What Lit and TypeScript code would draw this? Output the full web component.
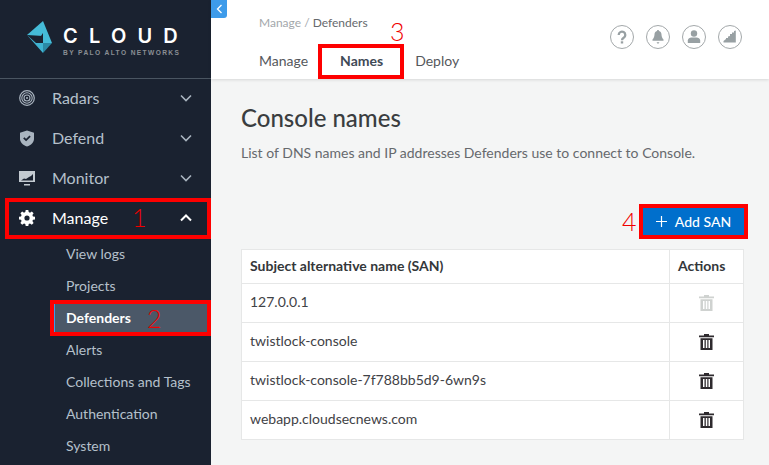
import { LitElement, html, css, svg } from "lit";
import { customElement } from "lit/decorators.js";

const chevDown = html`<svg class="chev" width="12" height="8" viewBox="0 0 12 8"><path d="M1 1.500l5 5 5-5" fill="none" stroke="currentColor" stroke-width="1.600"/></svg>`;
const chevUp = html`<svg class="chev" width="12" height="8" viewBox="0 0 12 8"><path d="M1 6.500l5-5 5 5" fill="none" stroke="currentColor" stroke-width="2"/></svg>`;

const radar = html`<svg width="16" height="16" viewBox="0 0 16 16" fill="none" stroke="#a9b4bf"><circle cx="8" cy="8" r="7.300" stroke-width="1.200"/><circle cx="8" cy="8" r="5.200" stroke-width="1.100"/><circle cx="8" cy="8" r="3" stroke-width="1.100"/><circle cx="8" cy="8" r="1" fill="#a9b4bf" stroke="none"/></svg>`;
const shield = html`<svg width="16" height="17" viewBox="0 0 16 17"><path d="M8 .5l7 2.300v6c0 3.800-3 6.400-7 7.700-4-1.300-7-3.900-7-7.700v-6z" fill="#a9b4bf"/><path d="M4.800 7.800l2.300 2.300 4-4" fill="none" stroke="#1a2230" stroke-width="1.800"/></svg>`;
const monitor = html`<svg width="16" height="15" viewBox="0 0 16 15"><path d="M0 0h16v11H0z" fill="#c3cad1"/><path d="M2 9.500l3-2 2 .5 3-2 2-1 2-2v6.500z" fill="#1a2230"/><path d="M5 13h6v1.500H5z" fill="#c3cad1"/></svg>`;
const gear = html`<svg width="16" height="16" viewBox="0 0 16 16"><path fill="#fff" fill-rule="evenodd" d="M6.700 0h2.600l.4 2.100 1.300.6 1.800-1.200 1.800 1.800-1.200 1.800.6 1.300 2 .4v2.600l-2 .4-.6 1.300 1.200 1.800-1.800 1.800-1.800-1.200-1.300.6-.4 2H6.700l-.4-2-1.300-.6-1.800 1.200-1.800-1.800 1.200-1.800-.6-1.300-2-.4V6.800l2-.4.6-1.300-1.200-1.800 1.800-1.800L5 2.700l1.300-.6zM8 5.400a2.600 2.600 0 100 5.200 2.600 2.600 0 000-5.200z"/></svg>`;

const trash = (cls: string) => svg`<svg class=${cls} width="15" height="16" viewBox="0 0 15 17" preserveAspectRatio="none" fill="currentColor"><path d="M5 0h5v1.500h5V3.500H0V1.500h5z"/><path fill-rule="evenodd" d="M1.500 4.500h12V17h-12zM4 6.500v8.500h1.500V6.500zM6.800 6.500v8.500h1.500V6.500zM9.500 6.500v8.500H11V6.500z"/></svg>`;

const ring = (inner: unknown) => html`<span class="round"><svg width="16" height="16" viewBox="0 0 16 16" fill="#98a0a3">${inner}</svg></span>`;

@customElement("app-root")
export class AppRoot extends LitElement {
  static styles = css`
    :host { display: block; width: 769px; height: 465px; overflow: hidden; font-family: Lato, "Open Sans", sans-serif; position: relative; }
    * { box-sizing: border-box; }
    .page { display: flex; height: 465px; background: #f4f5f5; }
    .side { width: 211px; flex: none; background: #1a2230; color: #b5c0cb; }
    .brand { height: 79px; margin-bottom: -1px; border-bottom: 1px solid #4a5561; display: flex; align-items: flex-start; padding: 20px 0 0 27px; gap: 11px; }
    .brand svg { flex: none; }
    .wordmark { display: flex; flex-direction: column; padding-top: 4px; }
    .cloud { font-family: "Inter", sans-serif; font-weight: 600; font-size: 20px; line-height: 24px; letter-spacing: 11.200px; color: #fff; white-space: nowrap; }
    .by { font-family: "Liberation Sans", sans-serif; font-weight: 700; font-size: 6.600px; line-height: 8px; letter-spacing: 1.400px; color: #8a8f94; white-space: nowrap; margin-top: 1px; }
    .item { height: 40px; display: flex; align-items: center; padding: 0 19px; font-size: 16px; position: relative; }
    .item .ico { width: 16px; display: flex; justify-content: center; margin-right: 17px; }
    .item .lbl { flex: 1; padding-bottom: 2px; }
    .chev { color: #a9b4bf; }
    .item.open { color: #fff; }
    .item.open .chev { color: #fff; }
    .sub { height: 32px; display: flex; align-items: center; padding-left: 66px; font-size: 14px; position: relative; }
    .sub.active { color: #fff; font-weight: 700; }
    .sub.active::before { content: ""; position: absolute; left: 54px; right: 4px; top: 0; bottom: 0; background: #4b5868; border-left: 1px solid #3c9be8; }
    .sub .t { position: relative; padding-bottom: 2px; }
    .mark { position: absolute; border: 4px solid #fe0000; pointer-events: none; }
    .mark.m1 { left: 5px; right: 0; top: 0; bottom: -1px; }
    .mark.m2 { left: 50px; right: 0; top: -2px; bottom: -2px; }
    .mark.m3 { left: -22px; right: -21px; top: -3px; bottom: -4px; }
    .mark.m4 { left: -4px; right: -4px; top: -4px; bottom: -4px; }
    .num { color: #f00000; position: absolute; font-size: 25px; line-height: 30px; font-weight: 300; }
    .num.n1 { left: 132px; top: 4px; }
    .num.n2 { left: 147px; top: 1px; }
    .num.n3 { left: 179px; top: 16px; }
    .num.n4 { left: -21px; top: -2px; }
    .main { flex: 1; min-width: 0; display: flex; flex-direction: column; position: relative; }
    .top { height: 79px; background: #fff; box-shadow: 0 1px 3px rgba(0,0,0,.12); padding: 15px 0 0 48px; position: relative; display: flex; flex-direction: column; }
    .toggle { position: absolute; left: 0; top: 0; width: 16px; height: 18px; background: #3d9bea; border-radius: 0 0 3px 0; display: flex; align-items: center; justify-content: center; }
    .crumb { font-size: 12px; line-height: 16px; color: #a3a7ab; }
    .crumb b { font-weight: 400; color: #66696d; }
    .tabs { display: flex; margin-top: 16px; font-size: 14px; line-height: 28px; color: #55585c; gap: 32px; }
    .tab { position: relative; }
    .tab.on { font-weight: 700; color: #3f4a56; }
    .icons { position: absolute; right: 27px; top: 25px; display: flex; gap: 12px; }
    .round { width: 24px; height: 24px; border: 1px solid #a3a8aa; border-radius: 50%; display: flex; align-items: center; justify-content: center; }
    .body { padding: 24px 25px 0 30px; flex: 1; }
    h1 { margin: 0; font-size: 24px; line-height: 30px; font-weight: 500; color: #3a3d40; }
    .desc { margin: 11px 0 0; font-size: 14px; line-height: 18px; color: #66696d; }
    .act { display: flex; justify-content: flex-end; margin-top: 46px; }
    .btn { position: relative; width: 101px; height: 27px; background: #006fcc; color: #fff; font-size: 14px; font-weight: 500; display: flex; align-items: center; justify-content: center; gap: 8px; }
    table { border-collapse: collapse; width: 503px; margin-top: 14px; background: #fff; font-size: 14px; color: #3f4246; }
    th, td { border: 1px solid #e6e7e7; padding: 0 8px 3px; text-align: left; }
    th { height: 34px; font-weight: 700; color: #34373a; }
    td { height: 39px; }
    .ac { width: 74px; }
    td.ac { padding: 0; }
    td.ac svg { display: block; margin: 0 auto; color: #2e2a2e; }
    td.ac svg.off { color: #cfd2d0; }
  `;

  render() {
    const top = [["Radars", radar], ["Defend", shield], ["Monitor", monitor]] as const;
    const subs = ["View logs", "Projects", "Defenders", "Alerts", "Collections and Tags", "Authentication", "System"];
    return html`<div class="page">
      <aside class="side">
        <div class="brand">
          <svg width="25" height="33" viewBox="0 0 25 33"><path d="M0 15L16 1v15z" fill="#45bcd8"/><path d="M0 15l16 18V23H9z" fill="#3fb4d2"/><path d="M16 1l9 22h-9z" fill="#45bcd8"/><path d="M16 23h9l-9 10z" fill="#2b8aa6"/><path d="M10 22l6-9v9z" fill="#1a2230"/></svg>
          <div class="wordmark"><span class="cloud">CLOUD</span><span class="by">BY PALO ALTO NETWORKS</span></div>
        </div>
        ${top.map(([l, i]) => html`<div class="item"><span class="ico">${i}</span><span class="lbl">${l}</span>${chevDown}</div>`)}
        <div class="item open"><span class="ico">${gear}</span><span class="lbl">Manage</span>${chevUp}<i class="mark m1"></i><span class="num n1">1</span></div>
        ${subs.map((s) => s === "Defenders"
          ? html`<div class="sub active"><span class="t">${s}</span><i class="mark m2"></i><span class="num n2">2</span></div>`
          : html`<div class="sub"><span class="t">${s}</span></div>`)}
      </aside>
      <main class="main">
        <div class="top">
          <div class="toggle"><svg width="7" height="10" viewBox="0 0 7 10"><path d="M5.500 1L1.500 5l4 4" fill="none" stroke="#fff" stroke-width="1.300"/></svg></div>
          <div class="crumb">Manage / <b>Defenders</b></div>
          <div class="tabs">
            <span class="tab">Manage</span>
            <span class="tab on">Names<i class="mark m3"></i></span>
            <span class="tab">Deploy</span>
          </div>
          <div class="icons">
            ${ring(svg`<path d="M4.700 6a3.300 3.300 0 1 1 5 2.800c-1.100.7-1.700 1.100-1.700 2.400" fill="none" stroke="#98a0a3" stroke-width="2.300"/><path d="M6.800 12.300h2.400v2.200H6.800z"/>`)}
            ${ring(svg`<path d="M8 1c.7 0 1 .4 1 1 1.700.5 2.400 1.800 2.500 3.500.1 2.200.7 3.500 2 5v1.200h-11v-1.200c1.300-1.500 1.900-2.800 2-5 .1-1.700.8-3 2.500-3.500 0-.6.3-1 1-1zM6.500 13.300h3L8 15z"/>`)}
            ${ring(svg`<circle cx="8" cy="4.500" r="3.200"/><path d="M1.800 14v-2.500c0-2 2-3 3.700-3h5c1.700 0 3.700 1 3.700 3V14z"/>`)}
            ${ring(svg`<path d="M1.500 13.500V12l2.500-2V9h2V7.500l2-.5V5h2V3.500h2V2l1.800-.5v12z"/>`)}
          </div>
        </div>
        <div class="body">
          <h1>Console names</h1>
          <p class="desc">List of DNS names and IP addresses Defenders use to connect to Console.</p>
          <div class="act"><div class="btn"><svg width="11" height="11" viewBox="0 0 11 11"><path d="M5.500 0v11M0 5.500h11" stroke="#fff" stroke-width="1.200"/></svg>Add SAN<i class="mark m4"></i><span class="num n4">4</span></div></div>
          <table>
            <tr><th>Subject alternative name (SAN)</th><th class="ac">Actions</th></tr>
            <tr><td>127.0.0.1</td><td class="ac">${trash("off")}</td></tr>
            <tr><td>twistlock-console</td><td class="ac">${trash("")}</td></tr>
            <tr><td>twistlock-console-7f788bb5d9-6wn9s</td><td class="ac">${trash("")}</td></tr>
            <tr><td>webapp.cloudsecnews.com</td><td class="ac">${trash("")}</td></tr>
          </table>
        </div>
        <span class="num n3">3</span>
      </main>
    </div>`;
  }
}
